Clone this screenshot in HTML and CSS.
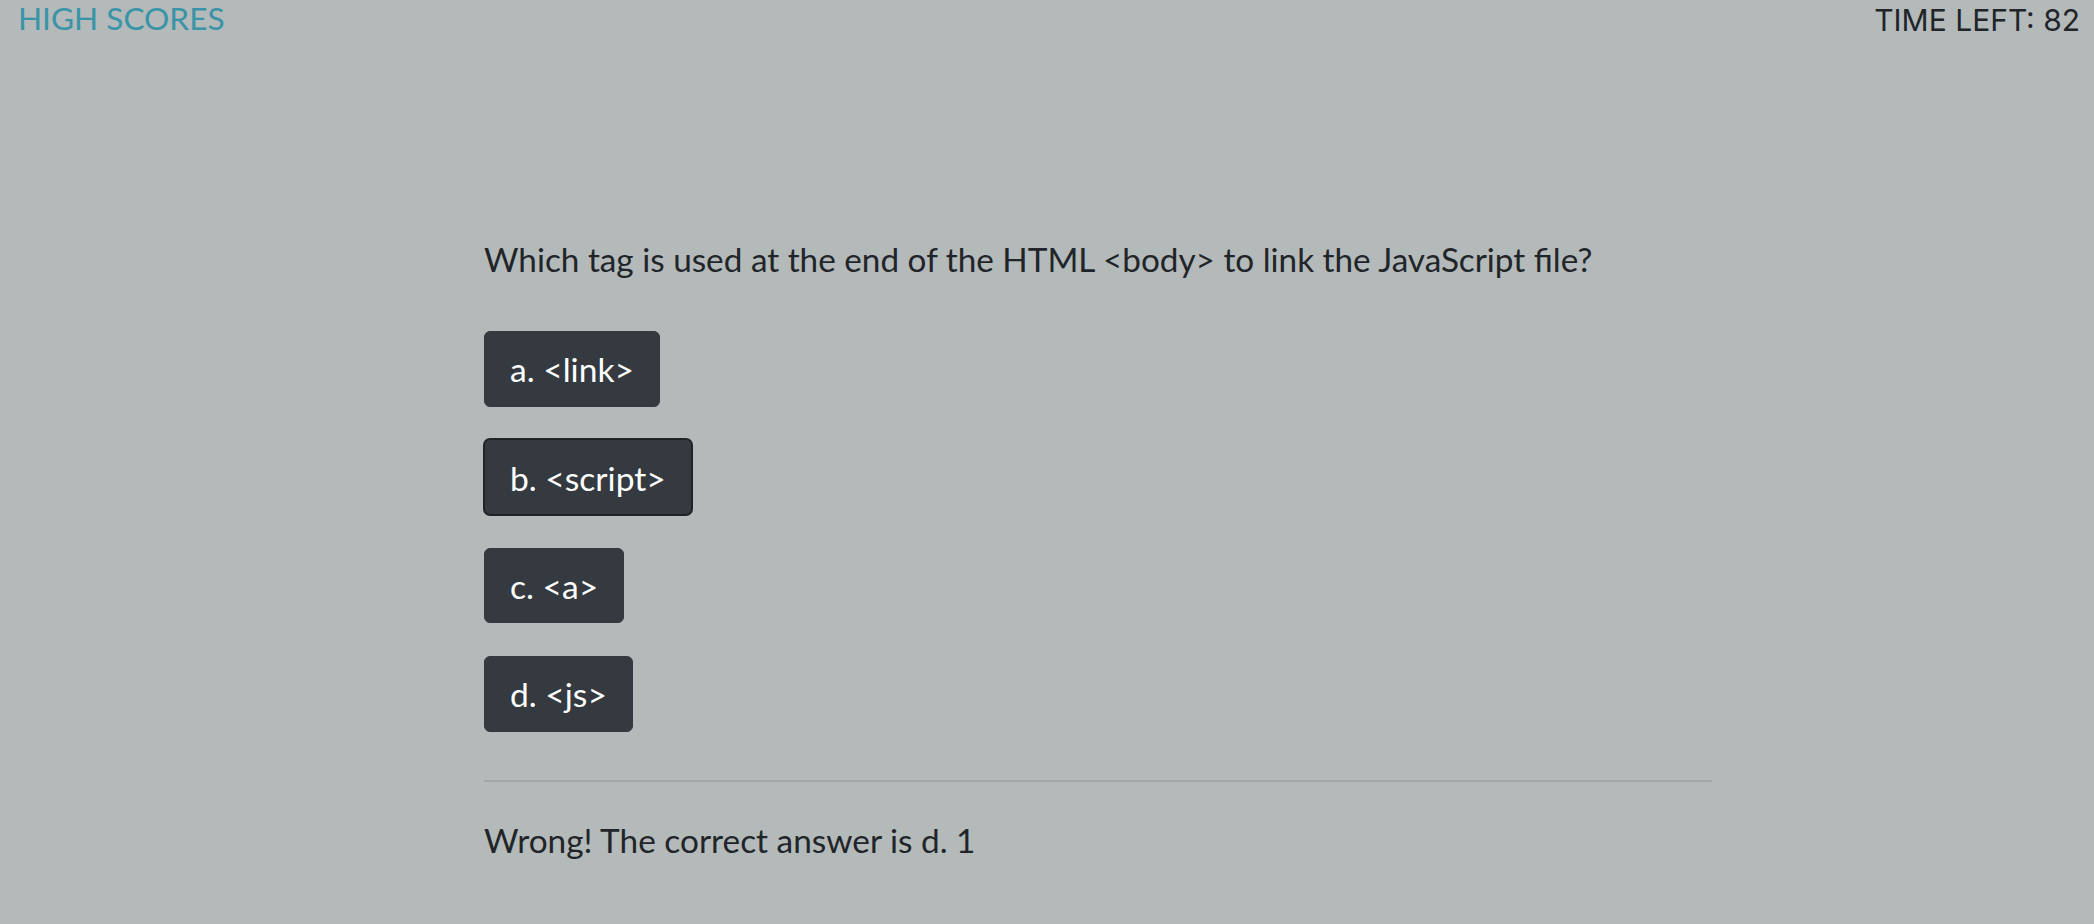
FILE: index.html
```html
<!DOCTYPE html>
<html lang="en">
<head>
<meta charset="utf-8">
<title>Code Quiz</title>
<link rel="stylesheet" href="styles.css">
</head>
<body>
<header class="topbar">
  <a class="scores-link" href="#">HIGH SCORES</a>
  <div class="timer">TIME LEFT: 82</div>
</header>
<main class="quiz">
  <h2 class="question">Which tag is used at the end of the HTML &lt;body&gt; to link the JavaScript file?</h2>
  <div class="choices">
    <button class="choice">a. &lt;link&gt;</button>
    <button class="choice is-focused">b. &lt;script&gt;</button>
    <button class="choice">c. &lt;a&gt;</button>
    <button class="choice">d. &lt;js&gt;</button>
  </div>
  <hr class="divider">
  <p class="feedback">Wrong! The correct answer is d. 1</p>
</main>
</body>
</html>
```
FILE: styles.css
```css
html, body {
  margin: 0;
  padding: 0;
}
body {
  background: #b4b9b9;
  color: #212529;
  font-family: Lato, "Noto Sans", sans-serif;
  height: 924px;
  overflow: hidden;
}
.topbar {
  display: flex;
  justify-content: space-between;
  align-items: flex-start;
  padding: 0 14px 0 18px;
}
.scores-link {
  color: #3994a8;
  text-decoration: none;
  font-family: Lato, sans-serif;
  font-size: 31.6px;
  line-height: 1.2;
  margin-top: 0;
}
.timer {
  font-family: Inter, Roboto, sans-serif;
  font-size: 30px;
  line-height: 1.2;
  padding-top: 2px;
  color: #212529;
}
.quiz {
  margin-left: 484px;
  width: 1228px;
  padding-top: 202px;
}
.question {
  margin: 0;
  font-size: 33.3px;
  font-weight: 400;
  line-height: 1.2;
}
.choices {
  display: flex;
  flex-direction: column;
  align-items: flex-start;
  gap: 32.5px;
  margin-top: 51px;
}
.choice {
  font-family: Lato, sans-serif;
  font-size: 33.6px;
  line-height: 1.2;
  color: #fff;
  background: #343a40;
  border: 1px solid #343a40;
  border-radius: 6px;
  padding: 17.5px 25px 16px;
  cursor: pointer;
}
.choice.is-focused {
  border-color: #1d2124;
  box-shadow: 0 0 0 1px #23272b;
}
.divider {
  margin: 48px 0 0;
  border: 0;
  height: 2px;
  background: #a2a7a7;
}
.feedback {
  margin: 38px 0 0;
  font-size: 33.4px;
  line-height: 1.2;
}
```
